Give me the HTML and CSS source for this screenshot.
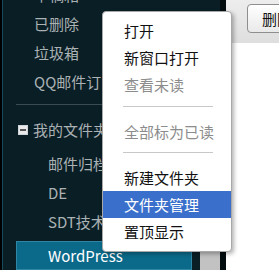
FILE: index.html
```html
<!DOCTYPE html>
<html lang="zh">
<head>
    <meta charset="UTF-8">
    <title>邮箱文件夹菜单</title>
    <link rel="stylesheet" href="styles.css">
</head>
<body>

<div class="sidebar">
    <ul class="nav-list">
        <li class="nav-item">草稿箱</li>
        <li class="nav-item">已删除</li>
        <li class="nav-item">垃圾箱</li>
        <li class="nav-item">QQ邮件订阅</li>
    </ul>
    <div class="nav-sep"></div>
    <div class="folder-head">
        <span class="fold-icon"></span>
        <span>我的文件夹</span>
    </div>
    <ul class="folder-list">
        <li class="folder-item">邮件归档</li>
        <li class="folder-item">DE</li>
        <li class="folder-item">SDT技术</li>
        <li class="folder-item active">WordPress</li>
    </ul>
</div>

<div class="scrollbar">
    <div class="scroll-thumb"></div>
</div>
<div class="divider"></div>

<div class="main">
    <div class="toolbar">
        <button class="tool-btn">删除</button>
    </div>
</div>

<!-- 右键菜单 -->
<div class="context-menu">
    <div class="menu-item">打开</div>
    <div class="menu-item">新窗口打开</div>
    <div class="menu-item disabled">查看未读</div>
    <div class="menu-sep"></div>
    <div class="menu-item disabled">全部标为已读</div>
    <div class="menu-sep"></div>
    <div class="menu-item">新建文件夹</div>
    <div class="menu-item selected">文件夹管理</div>
    <div class="menu-item">置顶显示</div>
</div>

</body>
</html>
```

FILE: styles.css
```css
body {
    font-family: "Noto Sans CJK SC", "Noto Sans", sans-serif;
    margin: 0;
    width: 279px;
    height: 270px;
    display: flex;
    overflow: hidden;
    position: relative;
    background: white;
}

ul {
    list-style: none;
    margin: 0;
    padding: 0;
}

.sidebar {
    width: 200px;
    flex-shrink: 0;
    box-sizing: border-box;
    background: #0a1e26;
    border-left: 2px solid #000;
    box-shadow: inset 1px 0 0 #16495a;
    color: #aab2b4;
    font-size: 15px;
    overflow: hidden;
}

.nav-list {
    margin-top: -20px;
}

.nav-item {
    line-height: 29px;
    padding-left: 32px;
    white-space: nowrap;
}

.nav-sep {
    height: 1px;
    background: #3a4b52;
    margin: 8px 0 10px 14px;
}

.folder-head {
    display: flex;
    align-items: center;
    height: 29px;
    padding-left: 16px;
    white-space: nowrap;
}

.fold-icon {
    width: 8px;
    height: 8px;
    border: 1px solid #d0d4d6;
    background: #e8eaeb;
    margin-right: 5px;
    position: relative;
}

.fold-icon::after {
    content: "";
    position: absolute;
    left: 1px;
    right: 1px;
    top: 3px;
    height: 2px;
    background: #555;
}

.folder-list {
    padding-top: 5px;
}

.folder-item {
    line-height: 29px;
    padding-left: 46px;
    white-space: nowrap;
}

.folder-item.active {
    margin: 5px 8px 0 14px;
    padding-left: 31px;
    line-height: 27px;
    background: #0b6a8a;
    border: 1px solid #2f86a4;
    color: white;
}

.scrollbar {
    width: 20px;
    flex-shrink: 0;
    background: #0a1e26;
    display: flex;
    flex-direction: column;
    justify-content: flex-end;
}

.scroll-thumb {
    height: 120px;
    background: #c2c2c2;
}

.divider {
    width: 6px;
    flex-shrink: 0;
    background: #020b0e;
}

.main {
    flex: 1;
    background: white;
}

.toolbar {
    height: 43px;
    box-sizing: border-box;
    padding: 4px 0 0 21px;
    background: linear-gradient(#ededed, #dedede);
    white-space: nowrap;
}

.tool-btn {
    height: 29px;
    padding: 0 14px;
    font-family: inherit;
    font-size: 15px;
    color: #111;
    border: 1px solid #8e8e8e;
    border-radius: 4px;
    background: linear-gradient(#ffffff, #e9e9e9);
}

.context-menu {
    position: absolute;
    left: 102px;
    top: 11px;
    width: 130px;
    box-sizing: border-box;
    padding: 5px 0 6px;
    background: white;
    border: 1px solid #a8a8a8;
    border-radius: 4px;
    box-shadow: 2px 2px 4px rgba(0, 0, 0, 0.3);
    font-size: 15px;
}

.menu-item {
    line-height: 27px;
    padding-left: 21px;
    color: #111;
    white-space: nowrap;
}

.menu-item.disabled {
    color: #8c8c8c;
}

.menu-item.selected {
    background: #3a70cc;
    color: white;
}

.menu-sep {
    height: 1px;
    background: #c8c8c8;
    margin: 8px 18px 11px 20px;
}

.menu-sep + .menu-item + .menu-sep {
    margin-top: 7px;
}
```
